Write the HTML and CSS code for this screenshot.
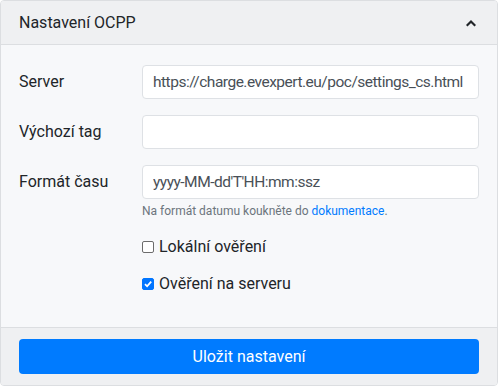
FILE: index.html
```html
<!DOCTYPE html>
<html lang="cs">
<head>
    <meta charset="UTF-8">
    <title>Nastavení OCPP</title>
    <link rel="stylesheet" href="styles.css">
</head>
<body>
    <div class="card">
        <div class="card-header">
            <span>Nastavení OCPP</span>
            <svg class="chevron" width="10" height="8" viewBox="0 0 10 8">
                <path d="M1.5 6 L5 2.5 L8.5 6" fill="none" stroke="#212529" stroke-width="2.2" stroke-linecap="square"/>
            </svg>
        </div>
        <div class="card-body">
            <div class="form-row">
                <label class="col-label">Server</label>
                <input type="text" class="form-control" value="https://charge.evexpert.eu/poc/settings_cs.html">
            </div>
            <div class="form-row">
                <label class="col-label">Výchozí tag</label>
                <input type="text" class="form-control" value="">
            </div>
            <div class="form-row">
                <label class="col-label">Formát času</label>
                <div>
                    <input type="text" class="form-control" value="yyyy-MM-dd'T'HH:mm:ssz">
                    <small class="help">Na formát datumu koukněte do <a href="#">dokumentace</a>.</small>
                </div>
            </div>
            <div class="form-row">
                <span></span>
                <div class="checks">
                    <label class="check"><span class="box"></span>Lokální ověření</label>
                    <label class="check"><span class="box checked">
                        <svg width="10" height="10" viewBox="0 0 10 10"><path d="M2 5.2 L4.1 7.3 L8.2 2.6" fill="none" stroke="#fff" stroke-width="1.8"/></svg>
                    </span>Ověření na serveru</label>
                </div>
            </div>
        </div>
        <div class="card-footer">
            <button class="btn btn-primary">Uložit nastavení</button>
        </div>
    </div>
</body>
</html>
```

FILE: styles.css
```css
body {
    margin: 0;
    font-family: Roboto, "Noto Sans", sans-serif;
    font-size: 16px;
    color: #212529;
    background: #fff;
}
.card {
    width: 496px;
    height: 384px;
    border: 1px solid #dcdee1;
    border-radius: 4px;
    background: #f7f8fa;
    display: flex;
    flex-direction: column;
    overflow: hidden;
}
.card-header {
    height: 43px;
    padding: 0 19px 0 18px;
    display: flex;
    align-items: center;
    justify-content: space-between;
    background: #eff0f2;
    border-bottom: 1px solid #dcdee1;
}
.chevron {
    margin-right: 2px;
}
.card-body {
    flex: 1;
    padding: 20px 18px 0 18px;
}
.form-row {
    display: grid;
    grid-template-columns: 123px 1fr;
    margin-bottom: 16px;
}
.col-label {
    line-height: 34px;
}
.form-control {
    box-sizing: border-box;
    width: 100%;
    height: 34px;
    padding: 0 10px;
    border: 1px solid #dee1e5;
    border-radius: 4px;
    background: #fff;
    font: inherit;
    font-size: 15.5px;
    letter-spacing: -0.5px;
    color: #495057;
}
.help {
    display: block;
    margin-top: 5px;
    font-size: 12px;
    color: #6c757d;
}
.help a {
    color: #007bff;
    text-decoration: none;
}
.checks {
    display: flex;
    flex-direction: column;
    gap: 15px;
    padding-top: 2px;
}
.check {
    display: flex;
    align-items: center;
    gap: 5px;
    line-height: 22px;
}
.box {
    box-sizing: border-box;
    width: 12px;
    height: 12px;
    border: 1px solid #6c6c6c;
    border-radius: 2px;
    background: #fff;
    display: flex;
    align-items: center;
    justify-content: center;
}
.box.checked {
    background: #0075ff;
    border-color: #0075ff;
}
.card-footer {
    height: 57px;
    padding: 0 18px;
    display: flex;
    align-items: center;
    background: #eff0f2;
    border-top: 1px solid #dcdee1;
}
.btn {
    width: 100%;
    height: 35px;
    border: none;
    border-radius: 4px;
    font: inherit;
    cursor: pointer;
}
.btn-primary {
    background: #007bff;
    color: #fff;
}
```
